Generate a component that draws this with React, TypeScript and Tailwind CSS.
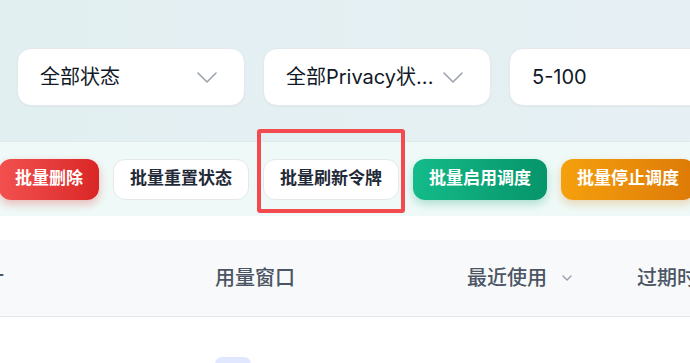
import { ChevronDown } from "lucide-react";

const FONT = { fontFamily: 'Inter, "Noto Sans CJK SC", sans-serif' };

function Chevron() {
  return (
    <svg width="20" height="11" viewBox="0 0 20 11" fill="none" aria-hidden>
      <polyline
        points="1,1 10,10 19,1"
        stroke="#9ca3af"
        strokeWidth="1.6"
        strokeLinecap="round"
        strokeLinejoin="round"
      />
    </svg>
  );
}

function SelectBox({ label, chevron = true }: { label: string; chevron?: boolean }) {
  return (
    <div className="flex h-[58px] w-[228px] shrink-0 items-center justify-between rounded-[14px] border border-[#e3e9ed] bg-white pl-[22px] pr-[27px] shadow-[0_1px_2px_rgba(15,23,42,0.04)]">
      <span className="truncate text-[20px] text-[#111827]">{label}</span>
      {chevron && <Chevron />}
    </div>
  );
}

const ACTIONS = [
  {
    label: "批量删除",
    className:
      "bg-gradient-to-r from-[#f2504f] to-[#d92525] text-white shadow-[0_4px_10px_rgba(220,38,38,0.3)]",
  },
  {
    label: "批量重置状态",
    className: "border border-[#e5e7eb] bg-white text-[#1f2937]",
  },
  {
    label: "批量刷新令牌",
    className: "border border-[#e5e7eb] bg-white text-[#1f2937]",
  },
  {
    label: "批量启用调度",
    className:
      "bg-gradient-to-r from-[#14bb8a] to-[#07946a] text-white shadow-[0_4px_10px_rgba(5,150,105,0.28)]",
  },
  {
    label: "批量停止调度",
    className:
      "bg-gradient-to-r from-[#f5a00e] to-[#dd7a07] text-white shadow-[0_4px_10px_rgba(217,119,6,0.28)]",
  },
];

export default function App() {
  return (
    <div className="relative h-[363px] w-[690px] overflow-hidden bg-white" style={FONT}>
      {/* filters */}
      <section className="flex h-[141px] gap-[18px] bg-gradient-to-r from-[#e2eff1] to-[#e6f0f4] pl-[17px] pt-[48px]">
        <SelectBox label="全部状态" />
        <SelectBox label="全部Privacy状..." />
        <SelectBox label="5-100" chevron={false} />
      </section>

      {/* bulk actions */}
      <section className="flex h-[75px] items-center border-t border-[#dfeaec] bg-[#effaf8]">
        <div className="-ml-[1px] flex items-center gap-[14px]">
          {ACTIONS.map((action) => (
            <button
              key={action.label}
              className={`flex h-[41px] shrink-0 items-center whitespace-nowrap rounded-[12px] px-4 text-[17px] font-semibold ${action.className}`}
            >
              {action.label}
            </button>
          ))}
        </div>
      </section>

      <div className="h-[24px]" />

      {/* table header */}
      <div className="flex h-[77px] items-center border-b border-[#e5e7eb] bg-[#f8f9fb] text-[20px] font-medium text-[#4b5563]">
        <div className="w-[215px] shrink-0">
          <span className="-ml-[36px] inline-block">统计</span>
        </div>
        <div className="w-[252px] shrink-0">用量窗口</div>
        <div className="flex w-[170px] shrink-0 items-center gap-[12px]">
          <span>最近使用</span>
          <ChevronDown className="h-[16px] w-[16px] text-[#9ca3af]" strokeWidth={2.2} />
        </div>
        <div className="whitespace-nowrap">过期时间</div>
      </div>

      {/* first row */}
      <div className="pl-[215px] pt-[40px]">
        <div className="h-[24px] w-[36px] rounded-[7px] bg-[#e0e7ff]" />
      </div>

      {/* annotation */}
      <div className="pointer-events-none absolute left-[257px] top-[129px] h-[84px] w-[148px] rounded-[3px] border-[4px] border-[#f24a4e]" />
    </div>
  );
}
